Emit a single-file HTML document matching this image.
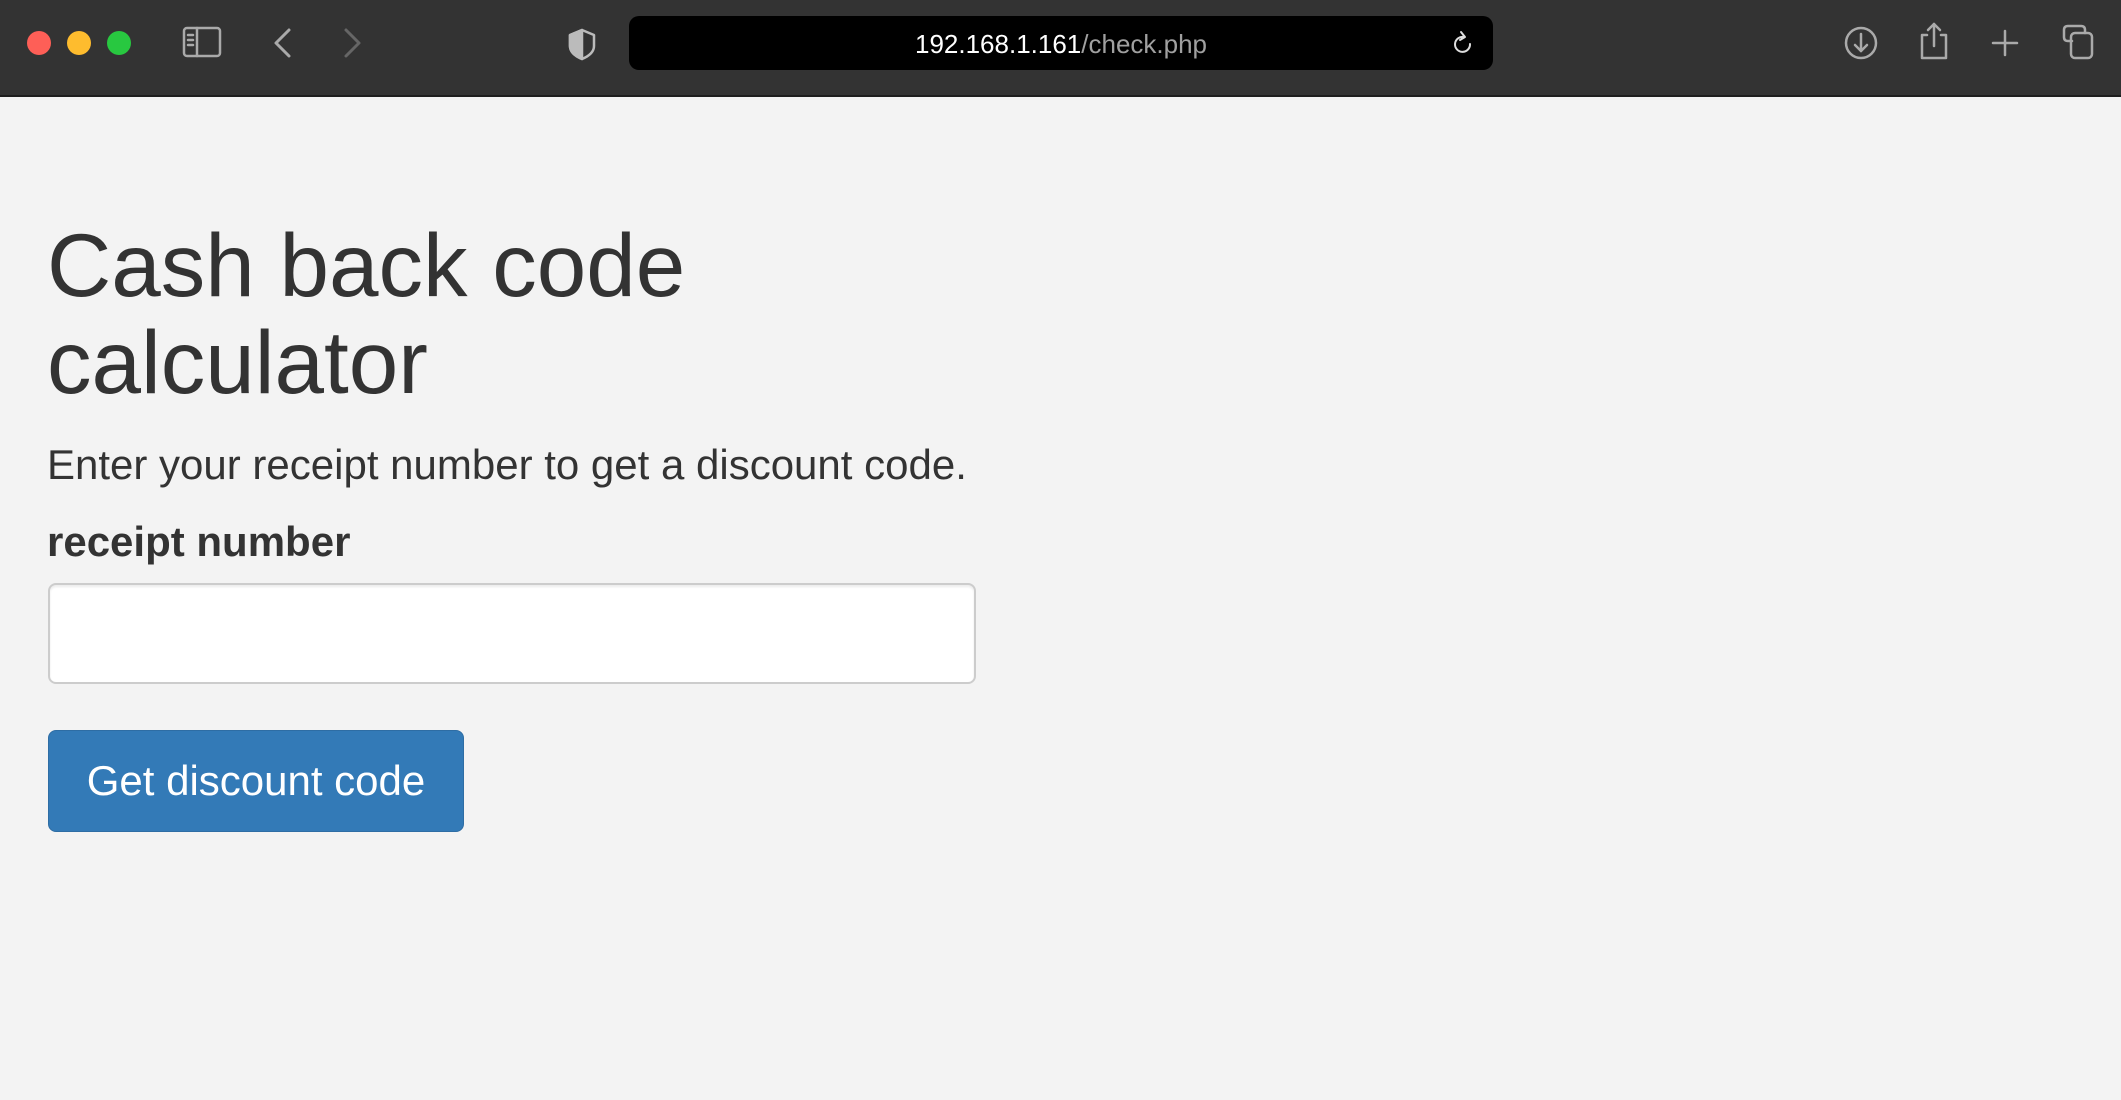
<!DOCTYPE html>
<html><head><meta charset="utf-8"><style>
html,body{margin:0;padding:0}
body{width:2121px;height:1100px;background:#f3f3f3;position:relative;overflow:hidden;font-family:"Liberation Sans",Arial,sans-serif;color:#333}
.bar{position:absolute;left:0;top:0;width:2121px;height:95px;background:#333;border-bottom:2px solid #1e1e1e}
.dot{position:absolute;top:31px;width:24px;height:24px;border-radius:50%}
.url{position:absolute;left:629px;top:16px;width:864px;height:54px;background:#000;border-radius:10px}
.url span{position:absolute;left:0;right:0;top:0;line-height:56px;text-align:center;font-size:26px;color:#fff;font-weight:500}
.abs{position:absolute;left:47px;white-space:nowrap}
</style></head><body>
<div class="bar">
<div class="dot" style="left:27px;background:#fe5f57"></div>
<div class="dot" style="left:67px;background:#febc2e"></div>
<div class="dot" style="left:107px;background:#28c840"></div>
<div class="url"><span>192.168.1.161<span style="position:static;color:#a0a0a0">/check.php</span></span></div>
<svg style="position:absolute;left:0;top:0" width="2121" height="95" fill="none" stroke="#aaa" stroke-width="2.5" stroke-linecap="round" stroke-linejoin="round">
<rect x="184" y="28" width="36" height="28" rx="3"/><line x1="197" y1="28" x2="197" y2="56"/>
<line x1="188" y1="35" x2="193" y2="35"/><line x1="188" y1="40" x2="193" y2="40"/><line x1="188" y1="45" x2="193" y2="45"/>
<polyline points="289,30 276,43 289,56" stroke-width="3"/>
<polyline points="346,30 359,43 346,56" stroke="#666" stroke-width="3"/>
<path d="M582 30 L594 35 L594 46 Q594 54 582 59 Q570 54 570 46 L570 35 Z" stroke="#bbb"/>
<path d="M582 30 L570 35 L570 46 Q570 54 582 59 Z" fill="#bbb" stroke="#bbb"/>
<path d="M2008 43 A7.5 7.5 0 1 1 2002 36 M1999 31 L2003 36 L1998 39" stroke="#ddd" stroke-width="2" transform="translate(-538,1)"/>
<circle cx="1861" cy="43" r="15"/><line x1="1861" y1="34" x2="1861" y2="51"/><polyline points="1855,45 1861,51 1867,45"/>
<path d="M1927 35 L1922 35 L1922 58 L1946 58 L1946 35 L1941 35"/><line x1="1934" y1="24" x2="1934" y2="46"/><polyline points="1928,30 1934,24 1940,30"/>
<line x1="2005" y1="31" x2="2005" y2="55"/><line x1="1993" y1="43" x2="2017" y2="43"/>
<path d="M2072 41 L2068 41 Q2064 41 2064 37 L2064 30 Q2064 26 2068 26 L2081 26 Q2085 26 2085 30 L2085 33"/>
<rect x="2071" y="33" width="21" height="25" rx="4"/>
</svg>
</div>
<div class="abs" style="top:217px;font-size:89px;line-height:97px">Cash back code<br>calculator</div>
<div class="abs" style="top:440px;font-size:42px;line-height:50px">Enter your receipt number to get a discount code.</div>
<div class="abs" style="top:517px;font-size:42px;line-height:50px;font-weight:bold">receipt number</div>
<div style="position:absolute;left:48px;top:583px;width:924px;height:97px;background:#fff;border:2px solid #ccc;border-radius:8px;box-shadow:inset 0 2px 2px rgba(0,0,0,.08)"></div>
<div style="position:absolute;left:48px;top:730px;width:414px;height:100px;background:#337ab7;border:1px solid #2e6da4;border-radius:8px;color:#fff;font-size:42px;line-height:100px;text-align:center;white-space:nowrap">Get discount code</div>
</body></html>
